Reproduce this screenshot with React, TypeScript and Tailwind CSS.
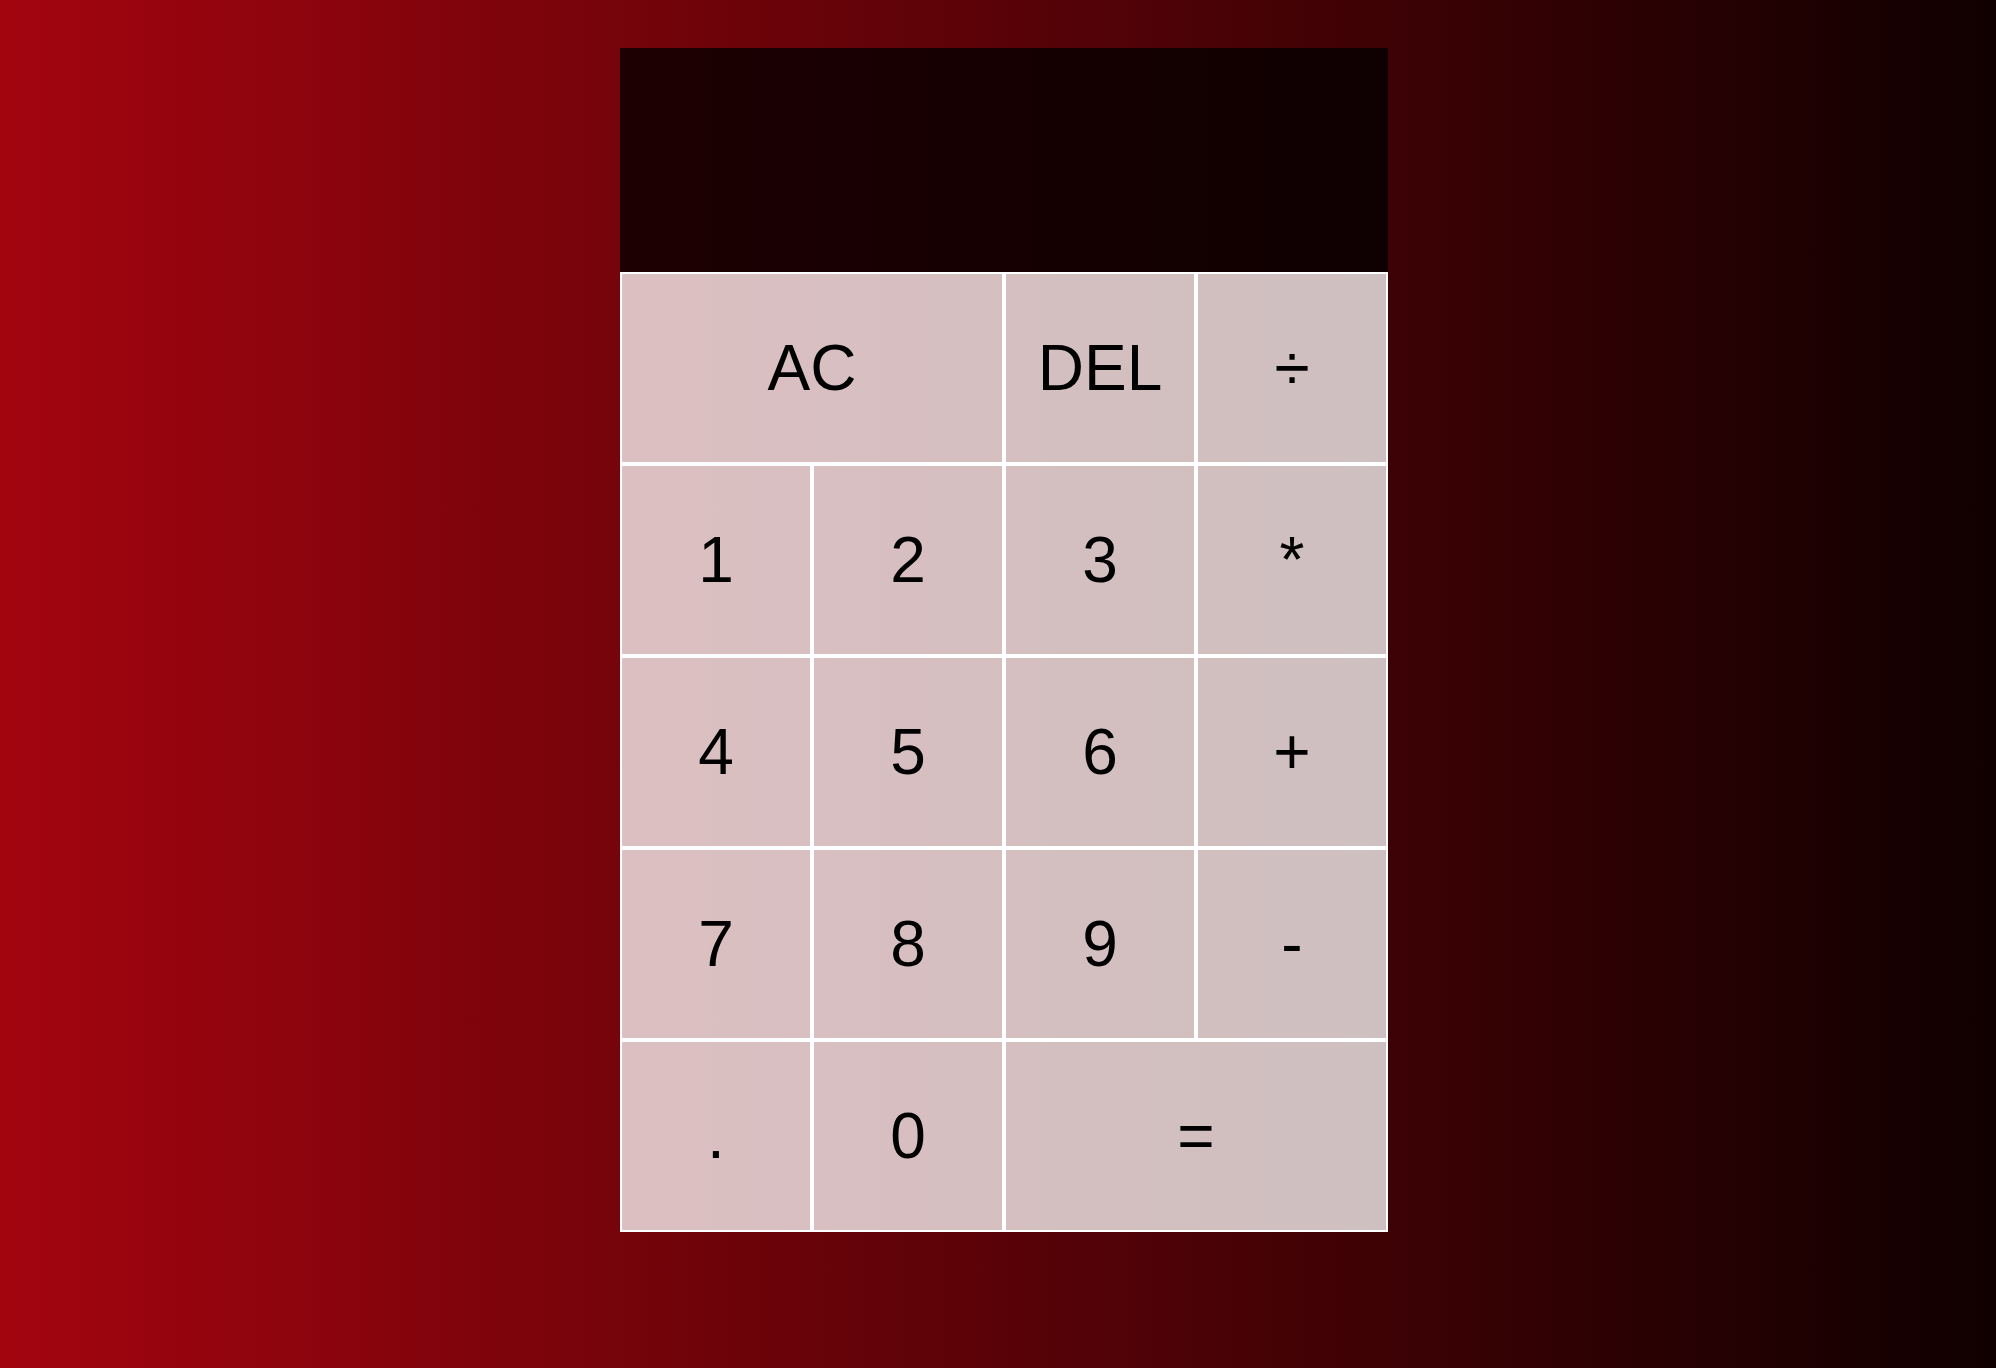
import { useState } from "react"

const keys: { label: string; wide?: boolean }[] = [
  { label: "AC", wide: true },
  { label: "DEL" },
  { label: "÷" },
  { label: "1" },
  { label: "2" },
  { label: "3" },
  { label: "*" },
  { label: "4" },
  { label: "5" },
  { label: "6" },
  { label: "+" },
  { label: "7" },
  { label: "8" },
  { label: "9" },
  { label: "-" },
  { label: "." },
  { label: "0" },
  { label: "=", wide: true },
]

export default function App() {
  const [current, setCurrent] = useState("")

  const handleKey = (label: string) => {
    if (label === "AC") setCurrent("")
    else if (label === "DEL") setCurrent(current.slice(0, -1))
    else if (label === "=") {
      try {
        // eslint-disable-next-line no-new-func
        const result = Function(`return (${current.replace(/÷/g, "/")})`)()
        setCurrent(String(result))
      } catch {
        setCurrent("")
      }
    } else setCurrent(current + label)
  }

  return (
    <div
      className="min-h-screen w-full bg-[linear-gradient(to_right,#a3050f,#100000)] pt-[48px] pb-[136px] pl-[12px]"
      style={{ fontFamily: '"Liberation Sans", Arial, sans-serif' }}
    >
      <div className="grid justify-center grid-cols-[repeat(4,192px)] grid-rows-[minmax(224px,auto)_repeat(5,192px)]">
        {/* Output */}
        <div className="col-span-4 flex flex-col items-end justify-around bg-black/75 px-5 py-5 break-all">
          <div className="text-[64px] text-white">{current}</div>
        </div>

        {keys.map((key) => (
          <button
            key={key.label}
            onClick={() => handleKey(key.label)}
            className={`cursor-pointer border-2 border-white bg-white/75 text-[64px] leading-none text-black outline-none hover:bg-white/90 ${
              key.wide ? "col-span-2" : ""
            }`}
          >
            {key.label}
          </button>
        ))}
      </div>
    </div>
  )
}
